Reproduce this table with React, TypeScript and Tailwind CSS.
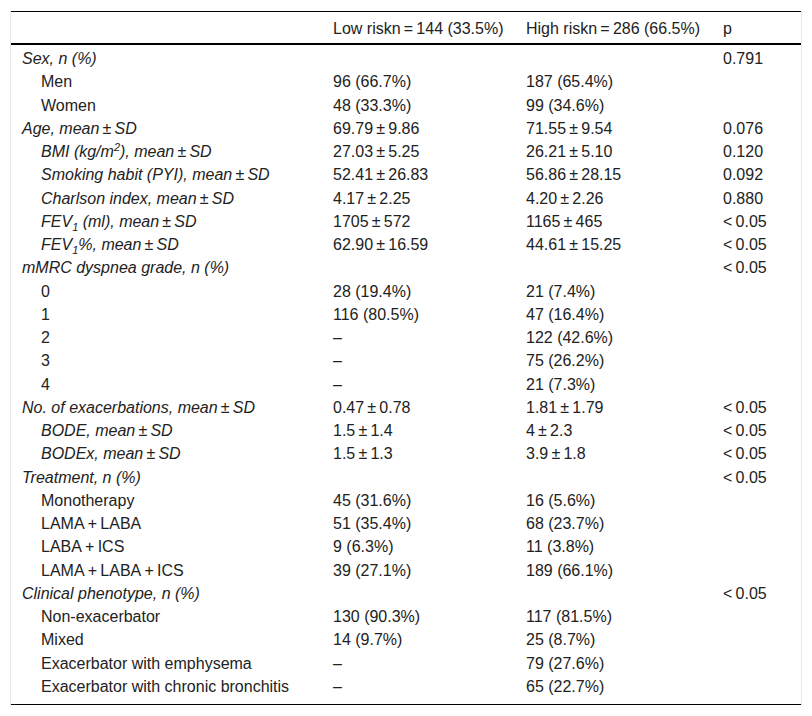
const t = '\u2009';
const pm = (a: string, b: string) => `${a}${t}±${t}${b}`;
const lt = `<${t}0.05`;
const mean = `mean${t}±${t}SD`;

type Row = {
  label: React.ReactNode;
  low?: string;
  high?: string;
  p?: string;
  group?: boolean;
  italic?: boolean;
};

const Sub = () => <sub className="text-[11px] relative top-[4px]">1</sub>;

const rows: Row[] = [
  { label: 'Sex, n (%)', group: true, p: '0.791' },
  { label: 'Men', low: '96 (66.7%)', high: '187 (65.4%)' },
  { label: 'Women', low: '48 (33.3%)', high: '99 (34.6%)' },
  { label: `Age, ${mean}`, group: true, low: pm('69.79', '9.86'), high: pm('71.55', '9.54'), p: '0.076' },
  {
    label: (
      <>
        BMI (kg/m<sup className="text-[11px] relative -top-[6px]">2</sup>), {mean}
      </>
    ),
    italic: true,
    low: pm('27.03', '5.25'),
    high: pm('26.21', '5.10'),
    p: '0.120',
  },
  { label: `Smoking habit (PYI), ${mean}`, italic: true, low: pm('52.41', '26.83'), high: pm('56.86', '28.15'), p: '0.092' },
  { label: `Charlson index, ${mean}`, italic: true, low: pm('4.17', '2.25'), high: pm('4.20', '2.26'), p: '0.880' },
  {
    label: (
      <>
        FEV<Sub /> (ml), {mean}
      </>
    ),
    italic: true,
    low: `1705${t}±${t}572`,
    high: `1165${t}±${t}465`,
    p: lt,
  },
  {
    label: (
      <>
        FEV<Sub />%, {mean}
      </>
    ),
    italic: true,
    low: pm('62.90', '16.59'),
    high: pm('44.61', '15.25'),
    p: lt,
  },
  { label: 'mMRC dyspnea grade, n (%)', group: true, p: lt },
  { label: '0', low: '28 (19.4%)', high: '21 (7.4%)' },
  { label: '1', low: '116 (80.5%)', high: '47 (16.4%)' },
  { label: '2', low: '–', high: '122 (42.6%)' },
  { label: '3', low: '–', high: '75 (26.2%)' },
  { label: '4', low: '–', high: '21 (7.3%)' },
  { label: `No. of exacerbations, ${mean}`, group: true, low: pm('0.47', '0.78'), high: pm('1.81', '1.79'), p: lt },
  { label: `BODE, ${mean}`, italic: true, low: pm('1.5', '1.4'), high: pm('4', '2.3'), p: lt },
  { label: `BODEx, ${mean}`, italic: true, low: pm('1.5', '1.3'), high: pm('3.9', '1.8'), p: lt },
  { label: 'Treatment, n (%)', group: true, p: lt },
  { label: 'Monotherapy', low: '45 (31.6%)', high: '16 (5.6%)' },
  { label: `LAMA${t}+${t}LABA`, low: '51 (35.4%)', high: '68 (23.7%)' },
  { label: `LABA${t}+${t}ICS`, low: '9 (6.3%)', high: '11 (3.8%)' },
  { label: `LAMA${t}+${t}LABA${t}+${t}ICS`, low: '39 (27.1%)', high: '189 (66.1%)' },
  { label: 'Clinical phenotype, n (%)', group: true, p: lt },
  { label: 'Non-exacerbator', low: '130 (90.3%)', high: '117 (81.5%)' },
  { label: 'Mixed', low: '14 (9.7%)', high: '25 (8.7%)' },
  { label: 'Exacerbator with emphysema', low: '–', high: '79 (27.6%)' },
  { label: 'Exacerbator with chronic bronchitis', low: '–', high: '65 (22.7%)' },
];

const cols = 'grid grid-cols-[311px_193px_197px_1fr]';

export default function App() {
  return (
    <div
      className="w-[812px] h-[716px] bg-white pt-[11px] px-[10px] text-[16px] text-[#222]"
      style={{ fontFamily: '"Liberation Sans", Arial, sans-serif' }}
    >
      <div className="border-x border-[#e8e8e8]">
        <div className={`${cols} h-[32px] pt-[3px] items-center border-t border-black`}>
          <div />
          <div className="pl-[11px] whitespace-nowrap">Low riskn{t}={t}144 (33.5%)</div>
          <div className="pl-[11px] whitespace-nowrap">High riskn{t}={t}286 (66.5%)</div>
          <div className="pl-[11px]">p</div>
        </div>
        <div className="border-t-2 border-black pt-[2px] pb-[6px]">
          {rows.map((r, i) => (
            <div key={i} className={`${cols} h-[23.25px] items-center`}>
              <div
                className={`${r.group ? 'pl-[11px] italic' : 'pl-[30px]'} ${r.italic ? 'italic' : ''} whitespace-nowrap leading-none`}
              >
                {r.label}
              </div>
              <div className="pl-[11px] whitespace-nowrap">{r.low}</div>
              <div className="pl-[11px] whitespace-nowrap">{r.high}</div>
              <div className="pl-[11px] whitespace-nowrap">{r.p}</div>
            </div>
          ))}
        </div>
        <div className="border-t border-black" />
      </div>
    </div>
  );
}
